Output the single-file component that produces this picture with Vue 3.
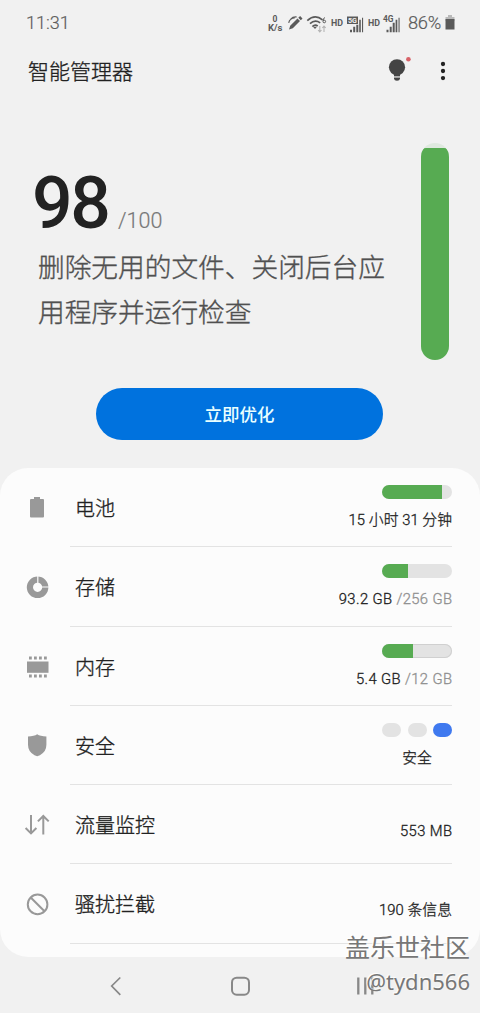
<script setup>
const rows = [
  { icon: 'battery', label: '电池', bar: 86, value: '15 小时 31 分钟' },
  { icon: 'storage', label: '存储', bar: 37, latin: true, value: '93.2 GB', total: '/256 GB' },
  { icon: 'memory', label: '内存', bar: 44, latin: true, outlined: true, value: '5.4 GB', total: '/12 GB' },
  { icon: 'shield', label: '安全', dots: true, value: '安全' },
  { icon: 'traffic', label: '流量监控', latin: true, value: '553 MB' },
  { icon: 'block', label: '骚扰拦截', value: '190 条信息' },
]
</script>

<template>
  <div class="screen">
    <header class="status">
      <span class="clock">11:31</span>
      <svg class="indicators" width="142" height="30" viewBox="0 0 142 30">
        <g class="tiny">
          <text x="11.4" y="13.7" font-size="8.5" textLength="5">0</text>
          <text x="7" y="23" font-size="9" textLength="14.5" lengthAdjust="spacingAndGlyphs">K/s</text>
          <text x="70" y="18" font-size="9" textLength="12" lengthAdjust="spacingAndGlyphs">HD</text>
          <text x="107" y="18" font-size="9" textLength="12" lengthAdjust="spacingAndGlyphs">HD</text>
          <text x="122" y="14" font-size="9" textLength="10.5" lengthAdjust="spacingAndGlyphs">4G</text>
        </g>
        <path d="M28 21.5l1.2-3.8 7.3-7.2 2.5 2.5-7.2 7.3-3.8 1.2z M37.3 9.7l1.8-1.7 2.4 2.4-1.7 1.8z" fill="#5a5a5a" />
        <path d="M27.7 13.8q1-4.5 6-4.8 M29.7 10.2q2.3-2.6 6-2.2" transform="translate(0 1)" fill="none" stroke="#5a5a5a" stroke-width="1.2" />
        <path d="M46.3 12.3Q54 5.3 61.5 11.6 M49 15.4Q54 10.9 59.2 14.6 M51.4 18.4Q54 15.7 56.7 17.7" transform="translate(0 .3)" fill="none" stroke="#5a5a5a" stroke-width="1.7" />
        <path d="M52 18.8h4l-2 2.3z" fill="#5a5a5a" />
        <circle cx="63.3" cy="13.5" r="1.3" fill="none" stroke="#5a5a5a" />
        <path d="M62 13q0-3 2-3.4" fill="none" stroke="#5a5a5a" />
        <path d="M58.8 17v6m-1.7-2l1.7 2 1.7-2 M63 23v-6m-1.7 2l1.7-2 1.7 2" transform="translate(0 1)" fill="none" stroke="#b4b4b4" stroke-width="1.1" />
        <rect x="86" y="8.5" width="11" height="7.5" fill="#5a5a5a" />
        <text x="87" y="15" class="inverse" font-size="7.8" textLength="9" lengthAdjust="spacingAndGlyphs">5G</text>
        <g fill="#5a5a5a">
          <path d="M89 21.5h2v2.5h-2z M92.2 18.5h2v5.5h-2z M95.3 16.5h2v7.5h-2z M98.2 11.5h1.6V24h-1.6z M101 9.5h1.1V24h-1.1z" transform="translate(0 .2)" />
          <path d="M126 21.5h2v2.5h-2z M129.2 18.5h2v5.5h-2z M132.2 14.5h2v9.5h-2z M135.1 11.5h1.7V24h-1.7z M138 9.5h1.1V24h-1.1z" transform="translate(-.5 .2)" />
        </g>
      </svg>
      <span class="percent">86%</span>
      <svg class="charge" width="10" height="16" viewBox="0 0 10 16">
        <path d="M3 0h4v2h2.5v4H.5V2H3z" fill="#b9b9b9" /><path d="M.5 4h9v10.5h-9z" fill="#5a5a5a" />
      </svg>
    </header>

    <div class="toolbar">
      <h1>智能管理器</h1>
      <svg width="28" height="28" viewBox="0 0 28 28">
        <g transform="translate(1 -1.7)">
          <circle cx="13" cy="12" r="8.1" fill="#444" />
          <path d="M10 18h6v3h-6z M10 22.3h6v1.2q-.3 2-3 2t-3-2z" fill="#444" />
          <path d="M10 21h6v1.3h-6z" fill="#aaa" />
        </g>
        <circle cx="25.4" cy="2.3" r="2.3" fill="#d86268" />
      </svg>
      <svg class="more" width="8" height="22" viewBox="0 0 8 22" fill="#222">
        <circle cx="4" cy="4" r="2.15" /><circle cx="4" cy="11" r="2.15" /><circle cx="4" cy="18.1" r="2.15" />
      </svg>
    </div>

    <section class="summary">
      <div class="copy">
        <div class="score"><b>98</b><span>/100</span></div>
        <p>删除无用的文件、关闭后台应<br>用程序并运行检查</p>
      </div>
      <div class="gauge"><div class="gauge-fill"></div></div>
    </section>

    <button class="optimize">立即优化</button>

    <main class="card">
      <div v-for="row in rows" :key="row.icon" class="row">
        <svg class="icon" width="28" height="28" viewBox="0 0 28 28">
          <path v-if="row.icon === 'battery'" d="M11 3h6v2h3q1 0 1 1v16.5q0 1-1 1H8q-1 0-1-1V6q0-1 1-1h3z" fill="#999" />
          <g v-else-if="row.icon === 'storage'">
            <circle cx="14.6" cy="14.3" r="7.7" fill="none" stroke="#999" stroke-width="6.2" />
            <path d="M14.8 2.5v8 M19 14h8" stroke="#fcfcfc" stroke-width="1.2" />
          </g>
          <g v-else-if="row.icon === 'memory'" fill="#999">
            <path d="M4 8.5h21.5v11.3H4z" />
            <path v-for="x in [6, 11, 16, 21]" :key="x" :d="`M${x} 3.5h2.8v3h-2.8z M${x} 21.5h2.8v3h-2.8z`" />
          </g>
          <path v-else-if="row.icon === 'shield'" d="M14.2 2.3q3 2 9.2 2.3v8.2q0 7-6.5 10.4l-2.7 1-2.7-1Q5 19.8 5 12.8V4.6Q11.2 4.3 14.2 2.3z" fill="#999" />
          <path v-else-if="row.icon === 'traffic'" d="M8 4v18 M2.6 17L8 22.4 13.4 17 M20.3 23.5V5 M14.9 10.4L20.3 5l5.4 5.4" fill="none" stroke="#999" stroke-width="2" />
          <g v-else fill="none" stroke="#999" stroke-width="2">
            <circle cx="14.6" cy="14.4" r="9.8" /><path d="M7.7 7.5l13.8 13.8" />
          </g>
        </svg>
        <div class="body">
          <span class="label">{{ row.label }}</span>
          <div class="info" :class="{ single: !row.bar && !row.dots }">
            <div v-if="row.bar" class="bar" :class="{ outlined: row.outlined }">
              <div class="fill" :style="{ width: row.bar + '%' }"></div>
            </div>
            <div v-if="row.dots" class="dots"><i></i><i></i><i class="on"></i></div>
            <span class="value" :class="{ centered: row.dots, latin: row.latin }">{{ row.value }}<em v-if="row.total">{{ ' ' + row.total }}</em></span>
          </div>
        </div>
      </div>
    </main>

    <nav>
      <svg width="480" height="56" viewBox="0 0 480 56" fill="none" stroke="#888" stroke-width="2">
        <path d="M120.3 20.5L111.7 29l8.6 8.8" stroke-width="1.7" />
        <rect x="232" y="20.7" width="17" height="17" rx="4.7" />
        <path d="M358.3 20.5v17 M365.3 20.5v17 M372.3 20.5v17" stroke-width="2.3" />
      </svg>
    </nav>
    <div class="watermark"><div class="community">盖乐世社区</div><div class="user">@tydn566</div></div>
  </div>
</template>

<style>
body { margin: 0; background: #f1f1f1; }
</style>

<style scoped>
.screen { position: relative; width: 480px; height: 1013px; overflow: hidden; background: #f1f1f1; color: #222; font-family: Roboto, "Noto Sans CJK SC", sans-serif; }
.status { height: 45px; display: flex; align-items: center; box-sizing: border-box; padding: 0 25px 0 26px; color: #5c5c5c; }
.clock { font-size: 18px; line-height: 24px; margin-right: auto; font-weight: 300; -webkit-text-stroke: .2px; }
.indicators { margin-right: 5px; flex: none; }
.tiny { fill: #5a5a5a; font-weight: 700; }
.inverse { fill: #f1f1f1; font-weight: 700; }
.percent { width: 37px; font-size: 18.3px; letter-spacing: -.3px; font-weight: 300; -webkit-text-stroke: .2px; }
.toolbar { height: 52px; display: flex; align-items: center; padding: 0 33px 0 28px; }
.toolbar svg { overflow: visible; }
h1 { margin: 2px auto 0 0; font-size: 21px; line-height: 30px; font-weight: 300; -webkit-text-stroke: .35px; }
.more { margin-left: 28px; }
.summary { display: flex; height: 291px; box-sizing: border-box; padding: 46px 31px 0 32px; justify-content: space-between; }
.copy { padding-top: 22px; }
.score { height: 81px; display: flex; align-items: baseline; line-height: 78px; }
.score b { font-size: 71.5px; font-weight: 500; letter-spacing: -2.3px; width: 86px; }
.score span { font-size: 21.5px; font-weight: 300; color: #777; -webkit-text-stroke: .2px; }
p { margin: 0 0 0 6px; font-size: 26.7px; line-height: 45px; color: #505050; white-space: nowrap; font-weight: 300; -webkit-text-stroke: .35px; }
.gauge { width: 28px; height: 217px; border-radius: 14px; overflow: hidden; background: #dfe9df; display: flex; align-items: flex-end; }
.gauge-fill { width: 100%; height: 212px; background: #57ab52; border-radius: 5px 5px 0 0; }
.optimize { display: block; width: 287px; height: 52px; margin: 0 0 0 96px; border: 0; padding: 2px 0 0; border-radius: 26px; background: #0072de; color: #e9ffff; font: 500 17.5px/50px Roboto, "Noto Sans CJK SC", sans-serif; }
.card { margin-top: 28px; height: 489px; border-radius: 28px; background: #fcfcfc; overflow: hidden; }
.row { display: flex; height: 79.3px; padding: 0 28px 0 23px; }
.icon { flex: none; margin: 26px 19px 0 0; }
.body { flex: 1; display: flex; justify-content: space-between; border-bottom: 1px solid #e3e3e3; box-sizing: border-box; padding-left: 5px; }
.label { font-size: 20px; line-height: 82px; height: 78px; font-weight: 300; -webkit-text-stroke: .35px; }
.info { display: flex; flex-direction: column; align-items: flex-end; padding-top: 17px; }
.info.single { padding-top: 35px; }
.value { font-size: 14.8px; line-height: 22px; white-space: pre; letter-spacing: .05px; font-weight: 300; -webkit-text-stroke: .3px; }
.value.latin { letter-spacing: .38px; margin-right: -.38px; }
.info:not(.single) .value { margin-top: 10px; }
.value.centered { align-self: center; }
em { font-style: normal; color: #909090; }
.bar { width: 70px; height: 14px; border-radius: 7px; overflow: hidden; background: #e3e3e3; }
.bar.outlined { box-shadow: inset 0 0 0 1px #d0d0d0; }
.fill { height: 14px; background: #57ab52; }
.dots { display: flex; width: 70px; justify-content: space-between; }
.dots i { width: 19px; height: 14px; border-radius: 7px; background: #e3e3e3; }
.dots .on { background: #3f79ef; }
nav { height: 56px; }
nav svg { display: block; }
.watermark { position: absolute; right: 10px; top: 931px; text-align: right; color: #777; text-shadow: -1px -1px 1px #fff; }
.community { font-size: 25px; line-height: 36px; font-weight: 400; }
.user { font: 22px/28px "Noto Sans", sans-serif; }
</style>
